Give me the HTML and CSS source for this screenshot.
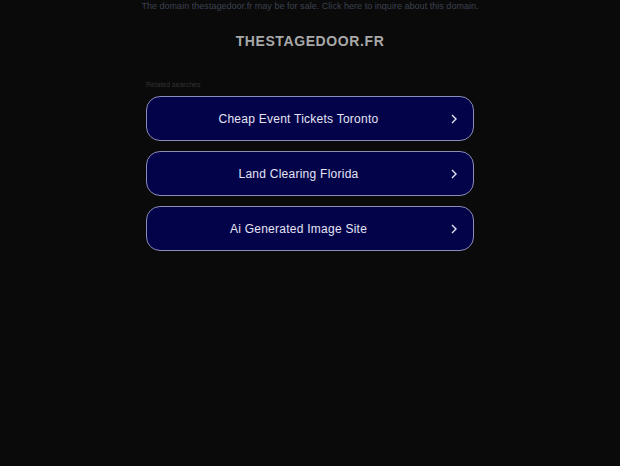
FILE: index.html
```html
<!DOCTYPE html>
<html lang="en">
<head>
    <meta charset="UTF-8">
    <title>thestagedoor.fr</title>
    <link rel="stylesheet" href="styles.css">
</head>
<body>
    <div class="notice">The domain thestagedoor.fr may be for sale. Click here to inquire about this domain.</div>
    <h1 class="domain">THESTAGEDOOR.FR</h1>
    <div class="related">
        <p class="label">Related searches</p>
        <a class="item" href="#"><span>Cheap Event Tickets Toronto</span><svg class="arrow" width="6" height="10" viewBox="0 0 6 10"><polyline points="1,1 5,5 1,9" fill="none" stroke="#e4e4f4" stroke-width="1.4"/></svg></a>
        <a class="item" href="#"><span>Land Clearing Florida</span><svg class="arrow" width="6" height="10" viewBox="0 0 6 10"><polyline points="1,1 5,5 1,9" fill="none" stroke="#e4e4f4" stroke-width="1.4"/></svg></a>
        <a class="item" href="#"><span>Ai Generated Image Site</span><svg class="arrow" width="6" height="10" viewBox="0 0 6 10"><polyline points="1,1 5,5 1,9" fill="none" stroke="#e4e4f4" stroke-width="1.4"/></svg></a>
    </div>
</body>
</html>
```

FILE: styles.css
```css
html,body{
    height: 100%;
}
body{
    margin: 0;
    padding-top: 1px;
    box-sizing: border-box;
    background-color: #0a0a0a;
    font-family: Arial, "Liberation Sans", sans-serif;
}
.notice{
    text-align: center;
    font-size: 9px;
    line-height: 11px;
    color: #3c4250;
    letter-spacing: 0.03px;
}
.domain{
    margin: 21px 0 0;
    text-align: center;
    font-size: 14px;
    line-height: 17px;
    color: #a8a8a8;
    letter-spacing: 0.6px;
}
.related{
    width: 328px;
    margin: 30px auto 0;
}
.related .label{
    margin: 0 0 7px;
    font-size: 7px;
    line-height: 9px;
    color: #333;
}
.related .item{
    display: flex;
    align-items: center;
    justify-content: center;
    position: relative;
    box-sizing: border-box;
    height: 45px;
    margin-bottom: 10px;
    background-color: #03034a;
    border: 1px solid #8c8cb8;
    border-radius: 14px;
    color: #e4e4f4;
    font-size: 12px;
    text-decoration: none;
    letter-spacing: 0.25px;
}
.related .item span{
    margin-right: 23px;
}
.related .arrow{
    position: absolute;
    right: 16px;
    top: 17px;
}
```
